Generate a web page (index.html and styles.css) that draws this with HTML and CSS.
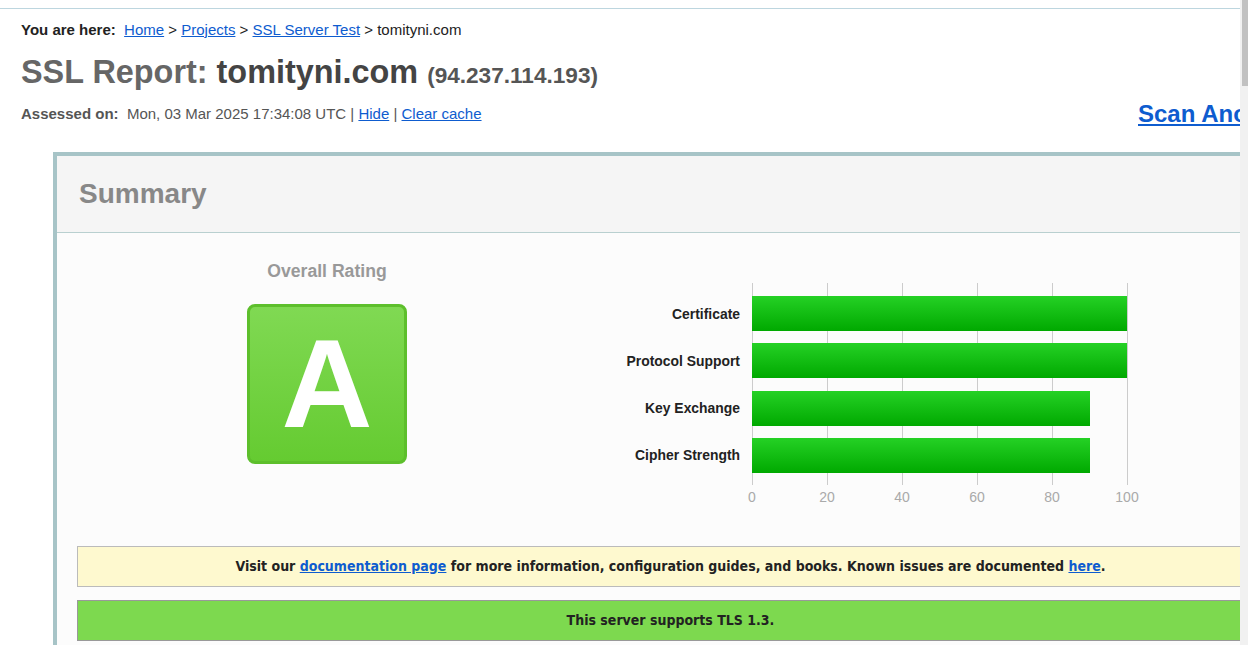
FILE: index.html
```html
<!DOCTYPE html>
<html lang="en">
<head>
<meta charset="utf-8">
<title>SSL Server Test: tomityni.com</title>
<link rel="stylesheet" href="styles.css">
</head>
<body>
<div class="screen">
  <div class="viewport">
    <div class="topline"></div>
    <div class="page">
      <div class="crumbs"><b>You are here:</b>&nbsp; <a href="#">Home</a> &gt; <a href="#">Projects</a> &gt; <a href="#">SSL Server Test</a> &gt; tomityni.com</div>
      <h1 class="title"><span class="t-lbl">SSL Report:</span> <span class="t-host">tomityni.com</span> <span class="t-ip">(94.237.114.193)</span></h1>
      <div class="assessed">
        <div class="assessed-info"><b>Assessed on:</b>&nbsp; Mon, 03 Mar 2025 17:34:08 UTC | <a href="#">Hide</a> | <a href="#">Clear cache</a></div>
        <a class="scan" href="#">Scan Another &raquo;</a>
      </div>
      <div class="summary">
        <div class="summary-head">Summary</div>
        <div class="summary-body">
          <div class="rating-row">
            <div class="rating-col">
              <div class="rating-title">Overall Rating</div>
              <div class="grade">A</div>
            </div>
            <div class="chart">
              <div class="chart-labels">
                <div class="chart-label">Certificate</div>
                <div class="chart-label">Protocol Support</div>
                <div class="chart-label">Key Exchange</div>
                <div class="chart-label">Cipher Strength</div>
              </div>
              <div class="chart-plot">
                <div class="bar" style="width:100%"></div>
                <div class="bar" style="width:100%"></div>
                <div class="bar" style="width:90%"></div>
                <div class="bar" style="width:90%"></div>
              </div>
              <div></div>
              <div class="chart-axis"><span>0</span><span>20</span><span>40</span><span>60</span><span>80</span><span>100</span></div>
            </div>
          </div>
          <div class="notice doc">Visit our <a href="#">documentation page</a> for more information, configuration guides, and books. Known issues are documented <a href="#">here</a>.</div>
          <div class="notice tls">This server supports TLS 1.3.</div>
        </div>
      </div>
    </div>
  </div>
  <div class="scrollbar"><div class="thumb"></div></div>
</div>
</body>
</html>
```

FILE: styles.css
```css
html, body {
  margin: 0;
  padding: 0;
  background: #fff;
}
body {
  font-family: "Liberation Sans", Arial, sans-serif;
  color: #222;
  overflow: hidden;
}
a {
  color: #0e5ccf;
  text-decoration: underline;
}
.screen {
  display: flex;
  width: 1248px;
  height: 645px;
  overflow: hidden;
}
.viewport {
  width: 1240px;
  flex-shrink: 0;
  overflow: hidden;
}
.topline {
  height: 8px;
  border-bottom: 1px solid #bdd6df;
}
.page {
  width: 1320px;
  padding-left: 21px;
}
.crumbs {
  margin-top: 12px;
  font-size: 15px;
  line-height: 18px;
  color: #222;
}
.crumbs b {
  color: #222;
}
.title {
  margin: 15px 0 0;
  font-size: 32.4px;
  line-height: 36px;
  font-weight: bold;
}
.t-lbl { color: #666; }
.t-host { color: #444; }
.t-ip {
  font-size: 22.6px;
  color: #555;
}
.assessed {
  margin-top: 5px;
  display: grid;
  grid-template-columns: 1117px auto;
  align-items: center;
  height: 30px;
}
.assessed-info {
  font-size: 15px;
  line-height: 18px;
  color: #555;
}
.assessed-info b { color: #555; }
.scan {
  font-size: 24px;
  line-height: 30px;
  font-weight: bold;
  white-space: nowrap;
}
.summary {
  margin-top: 23px;
  margin-left: 32px;
  width: 1227px;
  border-top: 4px solid #a7c4c7;
  border-left: 4px solid #a7c4c7;
  background: #fcfcfc;
}
.summary-head {
  height: 76px;
  line-height: 76px;
  padding-left: 22px;
  background: #f5f5f5;
  border-bottom: 1px solid #b9d0d0;
  font-size: 28px;
  font-weight: bold;
  color: #888;
}
.summary-body {
  padding: 28px 20px 20px;
}
.rating-row {
  display: flex;
  align-items: flex-start;
}
.rating-col {
  width: 500px;
  display: flex;
  flex-direction: column;
  align-items: center;
}
.rating-title {
  font-size: 17.6px;
  line-height: 20px;
  font-weight: bold;
  color: #999;
}
.grade {
  margin-top: 23px;
  width: 160px;
  height: 160px;
  box-sizing: border-box;
  border: 3px solid #5dbf2c;
  border-radius: 8px;
  background: linear-gradient(#80d953, #65cb31);
  color: #fff;
  font-size: 126px;
  line-height: 1;
  font-weight: bold;
  display: flex;
  align-items: center;
  justify-content: center;
}
.chart {
  margin-top: 22px;
  display: grid;
  grid-template-columns: 163px 376px;
  column-gap: 12px;
  row-gap: 4px;
}
.chart-labels {
  padding-top: 13px;
  display: flex;
  flex-direction: column;
  gap: 12.33px;
}
.chart-label {
  height: 35px;
  display: flex;
  align-items: center;
  justify-content: flex-end;
  font-size: 13.9px;
  font-weight: bold;
  color: #222;
  white-space: nowrap;
}
.chart-plot {
  box-sizing: border-box;
  width: 376px;
  padding: 13px 1px 12px 0;
  display: flex;
  flex-direction: column;
  gap: 12.33px;
  background: repeating-linear-gradient(to right, #cccccc 0 1px, transparent 1px 75px);
}
.bar {
  height: 35px;
  background: linear-gradient(#25d125, #00a900);
}
.chart-axis {
  display: flex;
  margin-left: -37.5px;
  font-size: 14px;
  line-height: 16px;
  color: #aaa;
}
.chart-axis span {
  width: 75px;
  flex-shrink: 0;
  text-align: center;
}
.notice {
  height: 41px;
  box-sizing: border-box;
  line-height: 39px;
  text-align: center;
  font-family: "DejaVu Sans Condensed", "DejaVu Sans", sans-serif;
  font-stretch: condensed;
  font-size: 14px;
  font-weight: bold;
  color: #222;
  white-space: nowrap;
}
.doc {
  margin-top: 41px;
  background: #fef9cf;
  border: 1px solid #bbbbbb;
}
.tls {
  margin-top: 13px;
  background: #7dd94f;
  border: 1px solid #999999;
}
.scrollbar {
  width: 8px;
  height: 645px;
  background: #f1f1f1;
  display: flex;
  justify-content: flex-end;
}
.thumb {
  width: 6px;
  height: 86px;
  background: #c1c1c1;
}
```
